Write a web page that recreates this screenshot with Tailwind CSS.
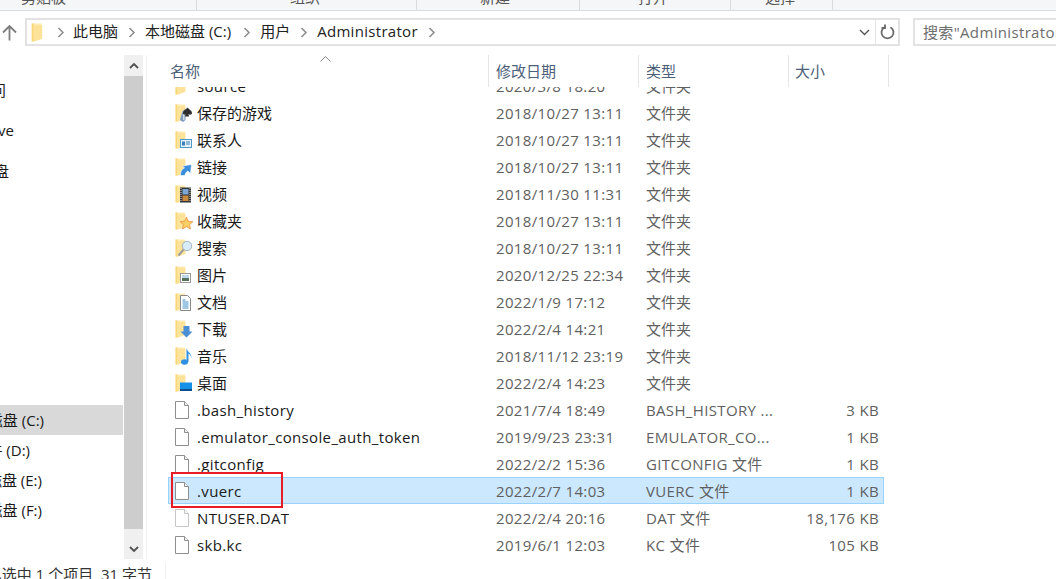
<!DOCTYPE html>
<html lang="zh-CN">
<head>
  <meta charset="UTF-8">
  <title>Administrator</title>
  <script src="https://cdn.jsdelivr.net/npm/@tailwindcss/browser@4"></script>
</head>
<body class="w-[1056px] h-[579px] overflow-hidden bg-white text-[15px] text-[#1a1a1a] font-['Open_Sans','Noto_Sans_CJK_SC',sans-serif]">

<svg class="hidden">
  <symbol id="folder" viewBox="0 0 12 20">
    <path d="M0.500 0.500h10.500v16l-7.500 3h-3z" fill="#ffeab0"/>
    <path d="M0.500 0.500h2v19h-2z" fill="#f8d778"/>
    <path d="M2.500 2.500l9-.5v14.500l-9 3z" fill="#fde39a"/>
  </symbol>
  <symbol id="file" viewBox="0 0 14 18">
    <path d="M.5.5h9l4 4v13h-13z" fill="#fff" stroke="#8e8e8e"/>
    <path d="M9.500.5v4h4" fill="#f0f0f0" stroke="#8e8e8e"/>
  </symbol>
  <symbol id="crumb" viewBox="0 0 7 11">
    <path d="M1.500 1l4.500 4.500-4.500 4.500" fill="none" stroke="#8a8a8a" stroke-width="1.500"/>
  </symbol>
</svg>

<!-- ribbon -->
<div class="h-[11px] bg-[#f5f6f7] border-b border-[#dadbdc] flex overflow-hidden text-[#555] text-[15px] leading-[20px]">
  <div class="w-[197px] h-[10px] border-r border-[#dadbdc] overflow-hidden"><span class="block -mt-[13px] pl-[21px]">剪贴板</span></div>
  <div class="w-[220px] h-[10px] border-r border-[#dadbdc] overflow-hidden"><span class="block -mt-[13px] pl-[93px]">组织</span></div>
  <div class="w-[163px] h-[10px] border-r border-[#dadbdc] overflow-hidden"><span class="block -mt-[13px] pl-[63px]">新建</span></div>
  <div class="w-[151px] h-[10px] border-r border-[#dadbdc] overflow-hidden"><span class="block -mt-[13px] pl-[58px]">打开</span></div>
  <div class="w-[102px] h-[10px] border-r border-[#dadbdc] overflow-hidden"><span class="block -mt-[13px] pl-[34px]">选择</span></div>
</div>

<!-- address bar -->
<div class="flex items-center h-[28px] mt-[7px]">
  <svg class="w-[15px] h-[17px] ml-[2px] mr-[8px]" viewBox="0 0 15 17" fill="none" stroke="#7d7d7d" stroke-width="1.800"><path d="M7.500 16.500V2M1 8.500l6.500-6.500 6.500 6.500"/></svg>
  <div class="w-[875px] h-[28px] border-2 border-[#e2e2e2] flex items-center text-[15px] text-[#222] [&>span]:-translate-y-px">
    <svg class="w-[12px] h-[19px] ml-[4px] mr-[14px]"><use href="#folder"/></svg>
    <svg class="w-[7px] h-[11px] mr-[9px]"><use href="#crumb"/></svg>
    <span class="mr-[10px]">此电脑</span>
    <svg class="w-[7px] h-[11px] mr-[10px]"><use href="#crumb"/></svg>
    <span class="mr-[12px]">本地磁盘 (C:)</span>
    <svg class="w-[7px] h-[11px] mr-[10px]"><use href="#crumb"/></svg>
    <span class="mr-[10px]">用户</span>
    <svg class="w-[7px] h-[11px] mr-[10px]"><use href="#crumb"/></svg>
    <span class="mr-[10px] tracking-[0.3px]">Administrator</span>
    <svg class="w-[7px] h-[11px]"><use href="#crumb"/></svg>
    <div class="ml-auto flex items-center h-full">
      <svg class="w-[11px] h-[7px] mr-[5px]" viewBox="0 0 11 7" fill="none" stroke="#555" stroke-width="1.400"><path d="M1 1l4.500 4.500L10 1"/></svg>
      <div class="w-[23px] h-full border-l border-[#e2e2e2] flex items-center justify-center">
        <svg class="w-[15px] h-[16px]" viewBox="0 0 15 16" fill="none" stroke="#6a6a6a" stroke-width="1.800"><path d="M4.500 3.200a6 6 0 1 0 6 0M5 .5v3.500h-3.500"/></svg>
      </div>
    </div>
  </div>
  <div class="ml-[13px] flex-1 h-[28px] border-2 border-r-0 border-[#e2e2e2] overflow-hidden whitespace-nowrap pl-[8px] leading-[24px] tracking-[0.35px] text-[#6d6d6d]">搜索"Administrator"</div>
</div>

<!-- main -->
<div class="flex h-[508px] mt-[9px]">
  <!-- nav pane, names are cut off by the left edge -->
  <div class="w-[124px]">
    <div class="w-[6px] flex justify-end whitespace-nowrap leading-[20px] mt-[25px]">快速访问</div>
    <div class="w-[14px] flex justify-end whitespace-nowrap leading-[20px] mt-[20px]">OneDrive</div>
    <div class="w-[9px] flex justify-end whitespace-nowrap leading-[20px] mt-[21px]">网盘</div>
    <div class="h-[30px] w-[123px] bg-[#d9d9d9] mt-[224px] flex items-center"><span class="w-[44px] flex justify-end whitespace-nowrap">本地磁盘 (C:)</span></div>
    <div class="w-[30px] flex justify-end whitespace-nowrap leading-[30px]">软件 (D:)</div>
    <div class="w-[42px] flex justify-end whitespace-nowrap leading-[30px]">本地磁盘 (E:)</div>
    <div class="w-[42px] flex justify-end whitespace-nowrap leading-[30px]">本地磁盘 (F:)</div>
  </div>

  <!-- nav scrollbar -->
  <div class="w-[19px] h-[504px] bg-[#f0f0f0] flex flex-col">
    <div class="h-[21px] flex items-center justify-center">
      <svg class="w-[10px] h-[7px]" viewBox="0 0 10 7" fill="none" stroke="#505050" stroke-width="1.800"><path d="M1 6l4-4 4 4"/></svg>
    </div>
    <div class="h-[453px] bg-[#cdcdcd]"></div>
    <div class="flex-1 flex items-center justify-center pt-[10px]">
      <svg class="w-[10px] h-[7px]" viewBox="0 0 10 7" fill="none" stroke="#505050" stroke-width="1.800"><path d="M1 1l4 4 4-4"/></svg>
    </div>
  </div>
  <div class="w-px h-[504px] ml-[3px] bg-[#f0f0f0]"></div>

  <!-- file list -->
  <div class="w-[740px] ml-[21px] relative">
    <div class="h-[32px] text-[#4c607a] flex">
      <div class="w-[321px] pl-[2px] pt-[5px] border-r border-[#e5e5e5] relative">名称
        <svg class="absolute left-[152px] top-px w-[11px] h-[6px]" viewBox="0 0 11 6" fill="none" stroke="#8a8a8a"><path d="M.5 5.500l5-5 5 5"/></svg>
      </div>
      <div class="w-[150px] pl-[7px] pt-[5px] border-r border-[#e5e5e5]">修改日期</div>
      <div class="w-[150px] pl-[7px] pt-[5px] border-r border-[#e5e5e5]">类型</div>
      <div class="w-[100px] pl-[6px] pt-[5px] border-r border-[#e5e5e5]">大小</div>
    </div>

    <div class="h-[476px] overflow-hidden text-[#5f5f5f] tracking-[0.35px] [&_span]:pt-[2px]">
      <div class="-mt-[15px]">
        <div class="w-[716px] h-[27px] flex items-center pl-[7px] pr-[5px]">
          <svg class="w-[18px] h-[18px] mr-[4px]" viewBox="0 0 18 18"><use href="#folder" width="11" height="18"/></svg>
          <span class="w-[299px] text-[#1a1a1a]">source</span><span class="w-[150px]">2020/3/8 18:20</span><span class="w-[140px] tracking-normal">文件夹</span><span class="flex-1 text-right"></span>
        </div>
        <div class="w-[716px] h-[27px] flex items-center pl-[7px] pr-[5px]">
          <svg class="w-[18px] h-[18px] mr-[4px]" viewBox="0 0 18 18"><use href="#folder" width="11" height="18"/><path d="M5 16l2.500-9 3-2v11l-2.500 2z" fill="#7d9cc0"/><path d="M8 9l1.500-3v10h-1.500z" fill="#d5dde5"/><path d="M12.500 3.500c1.500 2 4.500 3 4.500 5.500 0 2-2.500 2-3.500 1l.5 2.500h-4l.5-2.500c-1 1-2.500.5-2.500-1 0-2.500 3-3.500 4.500-5.500z" fill="#2e2e2e"/></svg>
          <span class="w-[299px] text-[#1a1a1a] tracking-normal">保存的游戏</span><span class="w-[150px]">2018/10/27 13:11</span><span class="w-[140px] tracking-normal">文件夹</span><span class="flex-1 text-right"></span>
        </div>
        <div class="w-[716px] h-[27px] flex items-center pl-[7px] pr-[5px]">
          <svg class="w-[18px] h-[18px] mr-[4px]" viewBox="0 0 18 18"><use href="#folder" width="11" height="18"/><rect x="5.500" y="8.500" width="11" height="8" fill="#e6f2fa" stroke="#4d9ac9"/><rect x="7" y="10.500" width="3" height="4" fill="#3b7fb8"/><path d="M11 11h4M11 13h4" stroke="#3b7fb8"/></svg>
          <span class="w-[299px] text-[#1a1a1a] tracking-normal">联系人</span><span class="w-[150px]">2018/10/27 13:11</span><span class="w-[140px] tracking-normal">文件夹</span><span class="flex-1 text-right"></span>
        </div>
        <div class="w-[716px] h-[27px] flex items-center pl-[7px] pr-[5px]">
          <svg class="w-[18px] h-[18px] mr-[4px]" viewBox="0 0 18 18"><use href="#folder" width="11" height="18"/><path d="M5.500 17.500c0-4.500 1.500-6.500 4-7.500L7.500 8l9-1.500-1 9-2.500-2.500c-2 1-3 2.500-3 4.500z" fill="#3b8ede" stroke="#fff" stroke-width=".6"/></svg>
          <span class="w-[299px] text-[#1a1a1a] tracking-normal">链接</span><span class="w-[150px]">2018/10/27 13:11</span><span class="w-[140px] tracking-normal">文件夹</span><span class="flex-1 text-right"></span>
        </div>
        <div class="w-[716px] h-[27px] flex items-center pl-[7px] pr-[5px]">
          <svg class="w-[18px] h-[18px] mr-[4px]" viewBox="0 0 18 18"><use href="#folder" width="11" height="18"/><rect x="5" y="2.500" width="11" height="15" fill="#333"/><rect x="7.500" y="4" width="6" height="5.500" fill="#7aa6d6"/><rect x="7.500" y="10.500" width="6" height="5.500" fill="#c78a3f"/><path d="M6 3v14M15 3v14" stroke="#ddd" stroke-dasharray="1 1"/></svg>
          <span class="w-[299px] text-[#1a1a1a] tracking-normal">视频</span><span class="w-[150px]">2018/11/30 11:31</span><span class="w-[140px] tracking-normal">文件夹</span><span class="flex-1 text-right"></span>
        </div>
        <div class="w-[716px] h-[27px] flex items-center pl-[7px] pr-[5px]">
          <svg class="w-[18px] h-[18px] mr-[4px]" viewBox="0 0 18 18"><use href="#folder" width="11" height="18"/><path d="M11.500 5l1.900 4.300 4.500.4-3.400 3 1 4.300-4-2.300-4 2.300 1-4.300-3.400-3 4.500-.4z" fill="#fbcf63" stroke="#ea8a3a" stroke-width=".7"/></svg>
          <span class="w-[299px] text-[#1a1a1a] tracking-normal">收藏夹</span><span class="w-[150px]">2018/10/27 13:11</span><span class="w-[140px] tracking-normal">文件夹</span><span class="flex-1 text-right"></span>
        </div>
        <div class="w-[716px] h-[27px] flex items-center pl-[7px] pr-[5px]">
          <svg class="w-[18px] h-[18px] mr-[4px]" viewBox="0 0 18 18"><use href="#folder" width="11" height="18"/><circle cx="12" cy="7" r="4.700" fill="#d8ebf8" stroke="#a3b5c4"/><path d="M8.500 10.500l-5 6" stroke="#9a9a9a" stroke-width="2"/></svg>
          <span class="w-[299px] text-[#1a1a1a] tracking-normal">搜索</span><span class="w-[150px]">2018/10/27 13:11</span><span class="w-[140px] tracking-normal">文件夹</span><span class="flex-1 text-right"></span>
        </div>
        <div class="w-[716px] h-[27px] flex items-center pl-[7px] pr-[5px]">
          <svg class="w-[18px] h-[18px] mr-[4px]" viewBox="0 0 18 18"><use href="#folder" width="11" height="18"/><rect x="5.500" y="7.500" width="10" height="9" fill="#fff" stroke="#999"/><rect x="7" y="9" width="7" height="3" fill="#bcd6ea"/><rect x="7" y="12" width="7" height="3" fill="#54705a"/></svg>
          <span class="w-[299px] text-[#1a1a1a] tracking-normal">图片</span><span class="w-[150px]">2020/12/25 22:34</span><span class="w-[140px] tracking-normal">文件夹</span><span class="flex-1 text-right"></span>
        </div>
        <div class="w-[716px] h-[27px] flex items-center pl-[7px] pr-[5px]">
          <svg class="w-[18px] h-[18px] mr-[4px]" viewBox="0 0 18 18"><use href="#folder" width="11" height="18"/><path d="M5.500 2.500h7l3 3v12h-10z" fill="#fff" stroke="#888"/><path d="M7.500 7h3M7.500 9h6M7.500 11h6M7.500 13h6M7.500 15h6" stroke="#3f8fc9"/></svg>
          <span class="w-[299px] text-[#1a1a1a] tracking-normal">文档</span><span class="w-[150px]">2022/1/9 17:12</span><span class="w-[140px] tracking-normal">文件夹</span><span class="flex-1 text-right"></span>
        </div>
        <div class="w-[716px] h-[27px] flex items-center pl-[7px] pr-[5px]">
          <svg class="w-[18px] h-[18px] mr-[4px]" viewBox="0 0 18 18"><use href="#folder" width="11" height="18"/><path d="M8.500 6h6v5.500h3L11.500 17.500 5.500 11.500h3z" fill="#4a8fd6"/></svg>
          <span class="w-[299px] text-[#1a1a1a] tracking-normal">下载</span><span class="w-[150px]">2022/2/4 14:21</span><span class="w-[140px] tracking-normal">文件夹</span><span class="flex-1 text-right"></span>
        </div>
        <div class="w-[716px] h-[27px] flex items-center pl-[7px] pr-[5px]">
          <svg class="w-[18px] h-[18px] mr-[4px]" viewBox="0 0 18 18"><use href="#folder" width="11" height="18"/><ellipse cx="9.500" cy="15" rx="3.500" ry="2.800" fill="#2f8fe0"/><path d="M11.500 15V1c.5 4 5.500 5 5 10.500-.5-3-2-4.500-3-5V15z" fill="#2f8fe0"/></svg>
          <span class="w-[299px] text-[#1a1a1a] tracking-normal">音乐</span><span class="w-[150px]">2018/11/12 23:19</span><span class="w-[140px] tracking-normal">文件夹</span><span class="flex-1 text-right"></span>
        </div>
        <div class="w-[716px] h-[27px] flex items-center pl-[7px] pr-[5px]">
          <svg class="w-[18px] h-[18px] mr-[4px]" viewBox="0 0 18 18"><use href="#folder" width="11" height="18"/><rect x="5" y="8.500" width="12" height="8.500" fill="#1590e8"/><rect x="5" y="15" width="12" height="2" fill="#0b4f8c"/></svg>
          <span class="w-[299px] text-[#1a1a1a] tracking-normal">桌面</span><span class="w-[150px]">2022/2/4 14:23</span><span class="w-[140px] tracking-normal">文件夹</span><span class="flex-1 text-right"></span>
        </div>
        <div class="w-[716px] h-[27px] flex items-center pl-[7px] pr-[5px]">
          <svg class="w-[14px] h-[18px] mr-[8px]"><use href="#file"/></svg>
          <span class="w-[299px] text-[#1a1a1a]">.bash_history</span><span class="w-[150px]">2021/7/4 18:49</span><span class="w-[140px] whitespace-nowrap">BASH_HISTORY ...</span><span class="flex-1 text-right">3 KB</span>
        </div>
        <div class="w-[716px] h-[27px] flex items-center pl-[7px] pr-[5px]">
          <svg class="w-[14px] h-[18px] mr-[8px]"><use href="#file"/></svg>
          <span class="w-[299px] text-[#1a1a1a]">.emulator_console_auth_token</span><span class="w-[150px]">2019/9/23 23:31</span><span class="w-[140px] whitespace-nowrap">EMULATOR_CO...</span><span class="flex-1 text-right">1 KB</span>
        </div>
        <div class="w-[716px] h-[27px] flex items-center pl-[7px] pr-[5px]">
          <svg class="w-[14px] h-[18px] mr-[8px]"><use href="#file"/></svg>
          <span class="w-[299px] text-[#1a1a1a]">.gitconfig</span><span class="w-[150px]">2022/2/2 15:36</span><span class="w-[140px]">GITCONFIG 文件</span><span class="flex-1 text-right">1 KB</span>
        </div>
        <div class="w-[716px] h-[27px] flex items-center pl-[6px] pr-[4px] bg-[#cce8ff] border border-[#99d1ff]">
          <svg class="w-[14px] h-[18px] mr-[8px]"><use href="#file"/></svg>
          <span class="w-[299px] text-[#1a1a1a]">.vuerc</span><span class="w-[150px]">2022/2/7 14:03</span><span class="w-[140px]">VUERC 文件</span><span class="flex-1 text-right">1 KB</span>
        </div>
        <div class="w-[716px] h-[27px] flex items-center pl-[7px] pr-[5px]">
          <svg class="w-[14px] h-[18px] mr-[8px] opacity-50"><use href="#file"/></svg>
          <span class="w-[299px] text-[#1a1a1a]">NTUSER.DAT</span><span class="w-[150px]">2022/2/4 20:16</span><span class="w-[140px]">DAT 文件</span><span class="flex-1 text-right">18,176 KB</span>
        </div>
        <div class="w-[716px] h-[27px] flex items-center pl-[7px] pr-[5px]">
          <svg class="w-[14px] h-[18px] mr-[8px]"><use href="#file"/></svg>
          <span class="w-[299px] text-[#1a1a1a]">skb.kc</span><span class="w-[150px]">2019/6/1 12:03</span><span class="w-[140px]">KC 文件</span><span class="flex-1 text-right">105 KB</span>
        </div>
      </div>
    </div>

    <!-- red annotation drawn over the screenshot -->
    <div class="absolute left-[3px] top-[417px] w-[112px] h-[36px] border-2 border-[#e81c24]"></div>
  </div>
</div>

<!-- status bar -->
<div class="h-[16px] flex overflow-hidden">
  <div class="w-[152px] flex justify-end whitespace-nowrap leading-[22px] text-[#333]">已选中 1 个项目&nbsp;&nbsp;31 字节</div>
  <div class="w-px h-full ml-[13px] bg-[#f0f0f0]"></div>
</div>

</body>
</html>
